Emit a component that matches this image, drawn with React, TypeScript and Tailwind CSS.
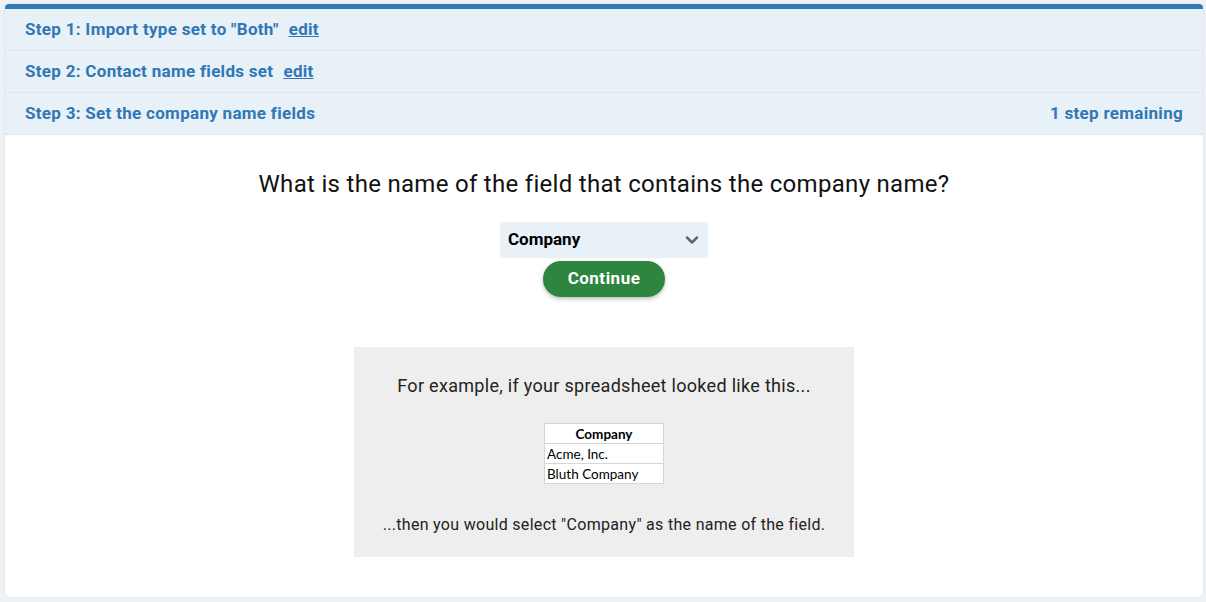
import { ChevronDown } from "lucide-react";

const steps = [
  { label: 'Step 1: Import type set to "Both"', edit: true },
  { label: "Step 2: Contact name fields set", edit: true },
  { label: "Step 3: Set the company name fields", edit: false, note: "1 step remaining" },
];

const rows = ["Acme, Inc.", "Bluth Company"];

export default function App() {
  return (
    <div className="min-h-[602px] w-[1206px] bg-[#eef2f6] pl-[5px] pr-[3px] pt-[4px] pb-[4px] font-['Roboto',sans-serif]">
      <div className="flex flex-col overflow-hidden rounded-t-[4px] rounded-b-[6px] border-t-[5px] border-[#2f7ab6] bg-white shadow-[0_0_0_1px_#e3e9ef]">
        {/* step header rows */}
        {steps.map((s) => (
          <div
            key={s.label}
            className="flex h-[42px] items-center justify-between border-b border-[#dde6ee] bg-[#e8f0f8] pl-[20px] pr-[20px] text-[17px] font-bold tracking-[0.3px] text-[#2f78b5]"
          >
            <div className="flex items-center">
              <span>{s.label}</span>
              {s.edit && <a className="ml-[10px] underline">edit</a>}
            </div>
            {s.note && <span>{s.note}</span>}
          </div>
        ))}

        <div className="flex flex-col items-center pt-[34px] pb-[40px]">
          <h2 className="text-[24px] leading-[30px] tracking-[0.3px] text-[#111]">
            What is the name of the field that contains the company name?
          </h2>

          <div className="mt-[23px] flex h-[36px] w-[208px] items-center justify-between rounded-[4px] bg-[#e8f0f8] pl-[8px] pr-[6px]">
            <span className="text-[17px] font-bold text-black">Company</span>
            <ChevronDown size={20} strokeWidth={3} className="text-[#666]" />
          </div>

          <button className="mt-[3px] h-[36px] w-[122px] rounded-full bg-[#2e8540] text-[17px] font-bold tracking-[0.5px] text-white shadow-[0_2px_4px_rgba(0,0,0,0.25)]">
            Continue
          </button>

          <div className="mt-[50px] flex h-[210px] w-[500px] flex-col items-center bg-[#eeeeee] pt-[27px]">
            <p className="text-[18px] leading-[24px] tracking-[0.3px] text-[#222]">
              For example, if your spreadsheet looked like this...
            </p>

            <table className="mt-[25px] w-[120px] border-collapse bg-white font-['Lato',sans-serif] text-[13.5px] leading-[16px] text-black">
              <thead>
                <tr>
                  <th className="h-[20px] border border-[#d6d6d6] p-0 text-center font-bold">Company</th>
                </tr>
              </thead>
              <tbody>
                {rows.map((r) => (
                  <tr key={r}>
                    <td className="h-[20px] border border-[#d6d6d6] px-[2px] py-0 text-left">{r}</td>
                  </tr>
                ))}
              </tbody>
            </table>

            <p className="mt-[30px] text-[16px] leading-[22px] tracking-[0.3px] text-[#222]">
              ...then you would select "Company" as the name of the field.
            </p>
          </div>
        </div>
      </div>
    </div>
  );
}
